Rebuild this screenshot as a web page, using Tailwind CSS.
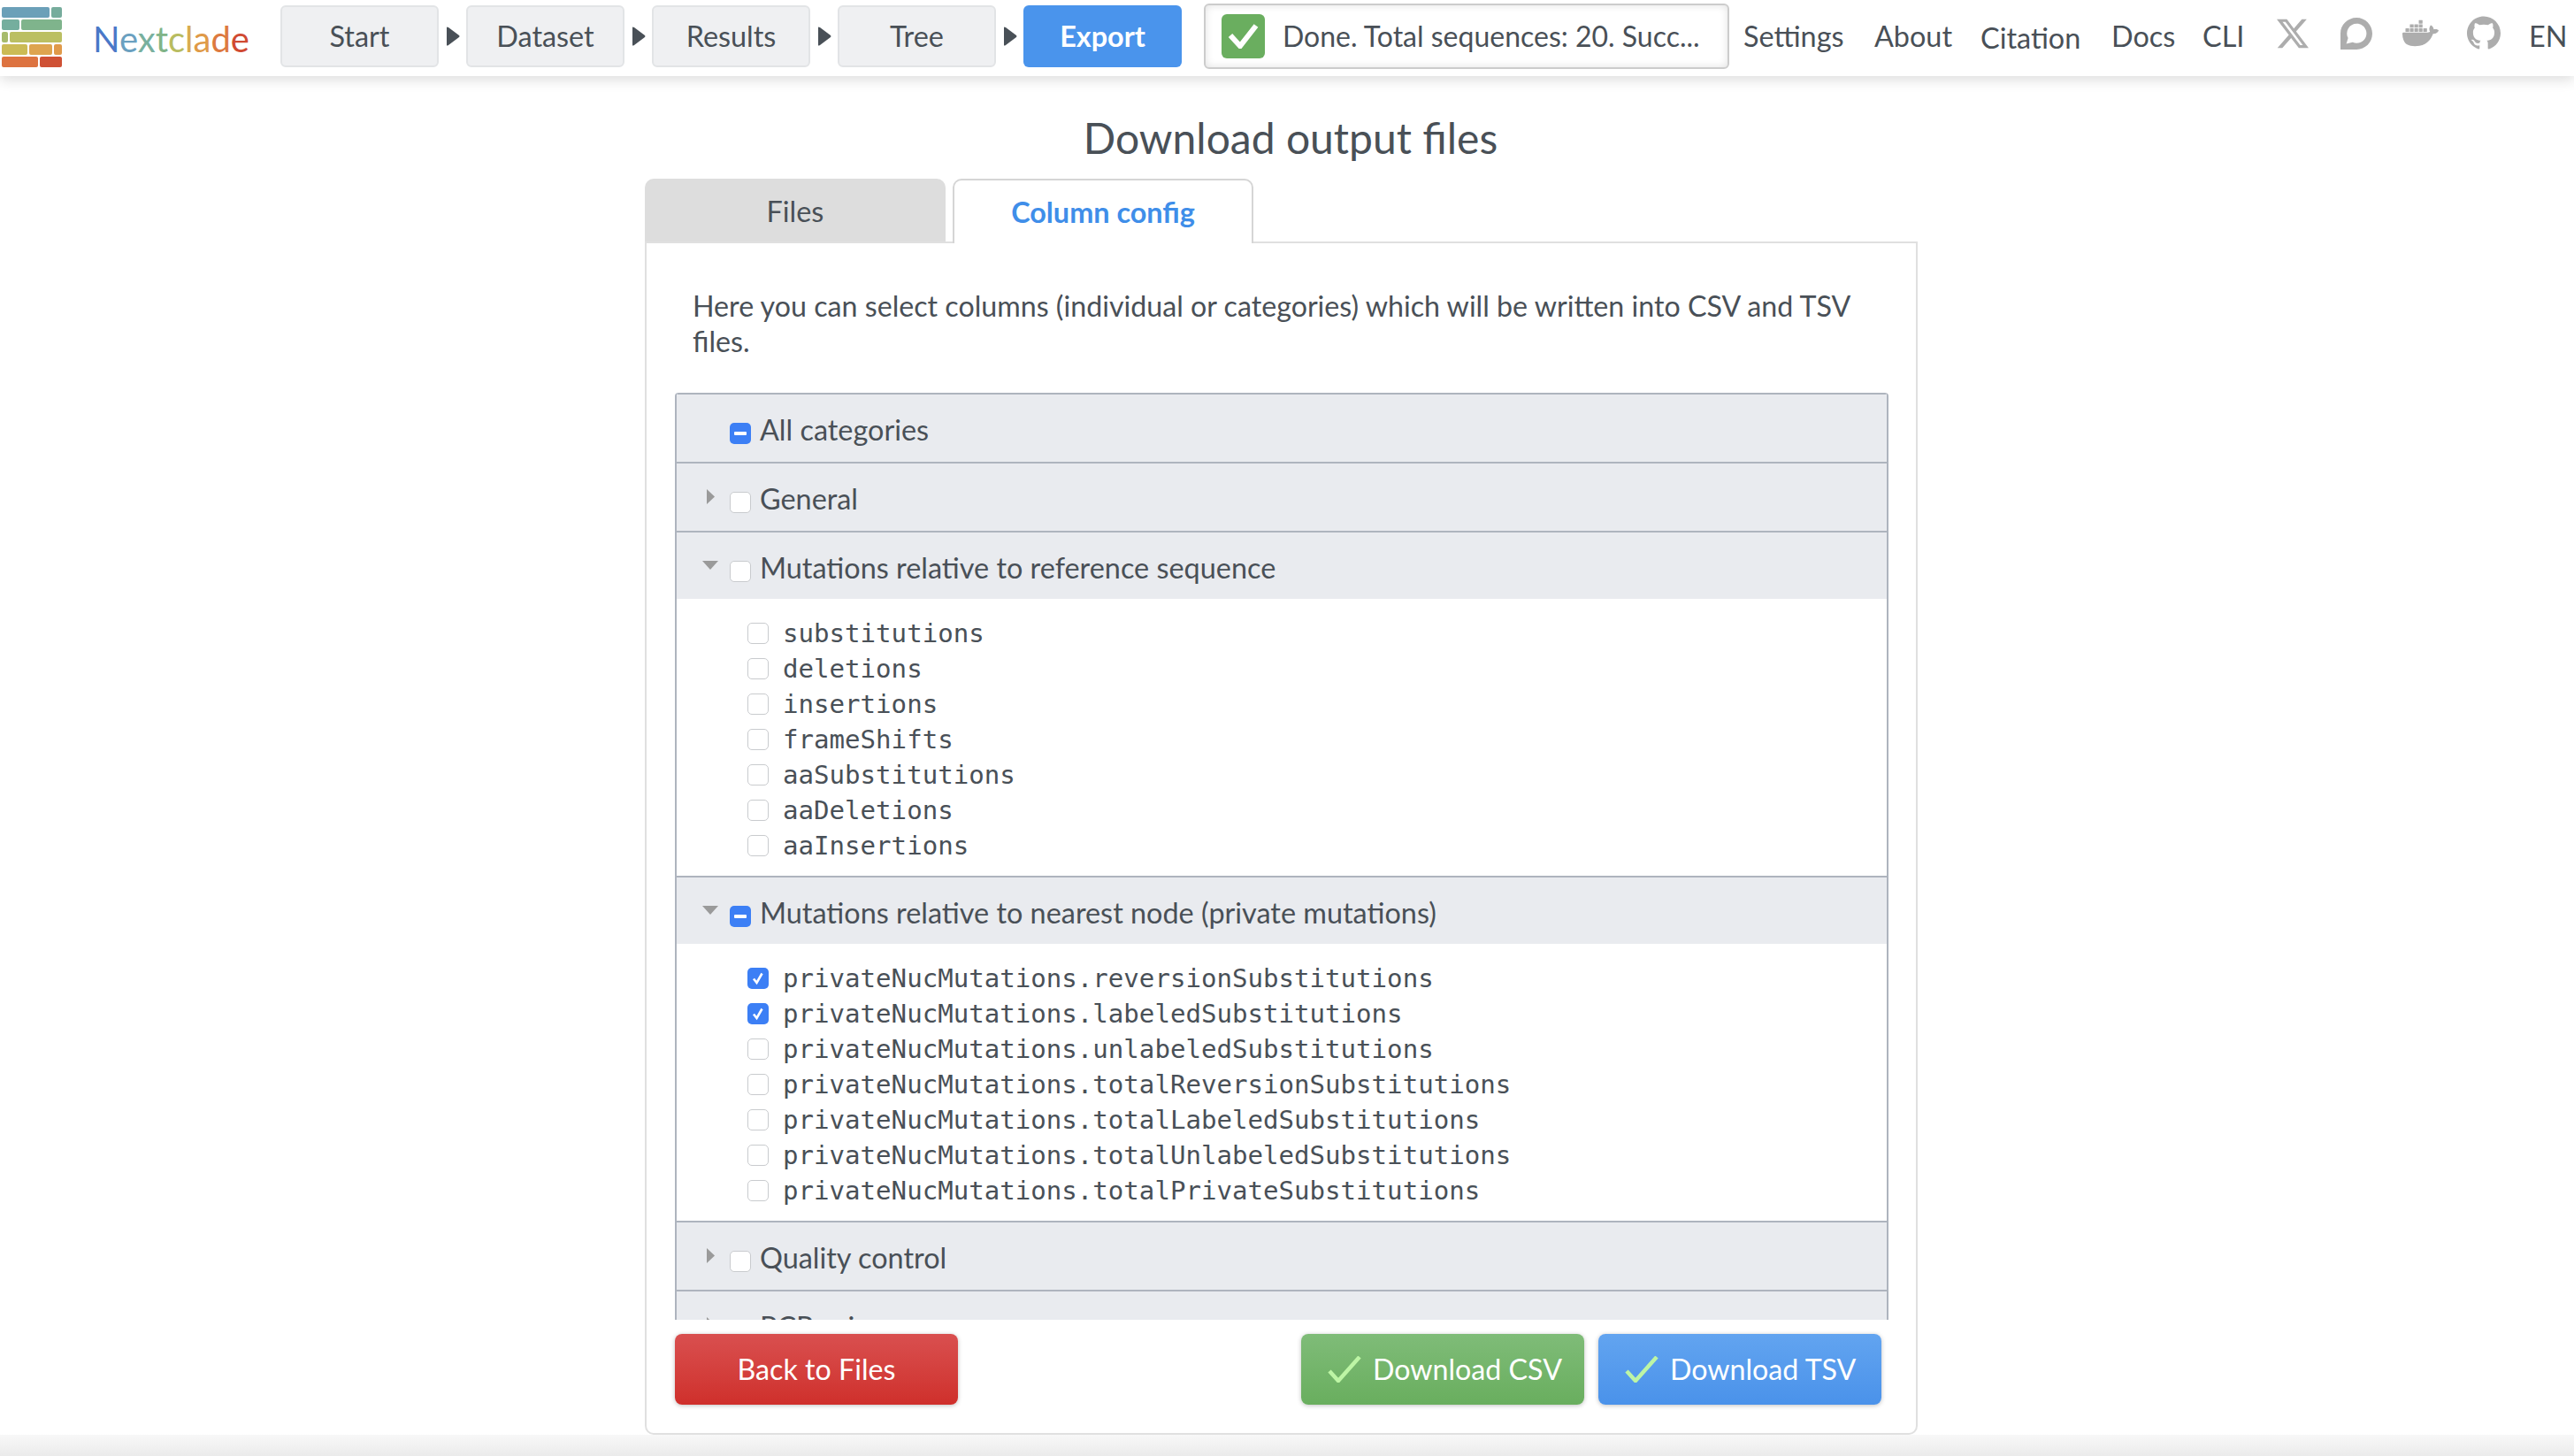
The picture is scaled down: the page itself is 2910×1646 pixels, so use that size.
<!DOCTYPE html>
<html lang="en">
<head>
  <meta charset="UTF-8" />
  <title>Nextclade</title>
  <script src="https://cdn.jsdelivr.net/npm/@tailwindcss/browser@4"></script>
</head>
<body class="bg-white text-[#495057] font-['Lato',sans-serif] text-[32.4px] leading-[40px]">
<div class="w-[2910px] h-[1646px] overflow-hidden flex flex-col">
  <!-- Navbar -->
  <nav class="h-[86px] shrink-0 flex items-center pb-[4px] relative z-10 bg-white shadow-[0_4px_14px_rgba(0,0,0,0.14)]">
    <!-- Logo -->
    <div class="w-[68px] ml-[2px] mt-[2px] flex flex-col gap-[2px]">
      <div class="flex gap-[2px] h-[12px]"><div class="w-[54px] bg-[#6ba0b8] rounded-[2px]"></div><div class="flex-1 bg-[#76ac9c] rounded-[2px]"></div></div>
      <div class="flex gap-[2px] h-[12px]"><div class="w-[20px] bg-[#75ae9e] rounded-[2px]"></div><div class="flex-1 bg-[#7fb48c] rounded-[2px]"></div></div>
      <div class="flex gap-[2px] h-[12px]"><div class="w-[7px] bg-[#a7bb6b] rounded-[2px]"></div><div class="flex-1 bg-[#bbbf62] rounded-[2px]"></div></div>
      <div class="flex gap-[2px] h-[12px]"><div class="w-[29px] bg-[#cbbb55] rounded-[2px]"></div><div class="w-[26px] bg-[#dea44f] rounded-[2px]"></div><div class="flex-1 bg-[#e09a4a] rounded-[2px]"></div></div>
      <div class="flex gap-[2px] h-[12px]"><div class="w-[41px] bg-[#dd7340] rounded-[2px]"></div><div class="flex-1 bg-[#cf5135] rounded-[2px]"></div></div>
    </div>
    <div class="ml-[35px] mt-[6px] w-[212px] text-[40px] font-normal"><span class="text-[#4a78c8]">N</span><span class="text-[#6aa0c0]">e</span><span class="text-[#78b09e]">x</span><span class="text-[#80b488]">t</span><span class="text-[#b8bc60]">c</span><span class="text-[#d8ac50]">l</span><span class="text-[#df9a48]">a</span><span class="text-[#dd7a40]">d</span><span class="text-[#d04a32]">e</span></div>

    <!-- Steps -->
    <div class="w-[179px] h-[70px] flex items-center justify-center bg-[#eff0f2] border-2 border-[#e2e4e6] rounded-[6px]">Start</div>
    <div class="w-[31px] pl-[2px] flex justify-center"><svg width="15" height="22" viewBox="0 0 15 22"><path d="M0 1 Q0 0 2 1 L14 10 Q15 11 14 12 L2 21 Q0 22 0 21 Z" fill="#495057"/></svg></div>
    <div class="w-[179px] h-[70px] flex items-center justify-center bg-[#eff0f2] border-2 border-[#e2e4e6] rounded-[6px]">Dataset</div>
    <div class="w-[31px] pl-[2px] flex justify-center"><svg width="15" height="22" viewBox="0 0 15 22"><path d="M0 1 Q0 0 2 1 L14 10 Q15 11 14 12 L2 21 Q0 22 0 21 Z" fill="#495057"/></svg></div>
    <div class="w-[179px] h-[70px] flex items-center justify-center bg-[#eff0f2] border-2 border-[#e2e4e6] rounded-[6px]">Results</div>
    <div class="w-[31px] pl-[2px] flex justify-center"><svg width="15" height="22" viewBox="0 0 15 22"><path d="M0 1 Q0 0 2 1 L14 10 Q15 11 14 12 L2 21 Q0 22 0 21 Z" fill="#495057"/></svg></div>
    <div class="w-[179px] h-[70px] flex items-center justify-center bg-[#eff0f2] border-2 border-[#e2e4e6] rounded-[6px]">Tree</div>
    <div class="w-[31px] pl-[2px] flex justify-center"><svg width="15" height="22" viewBox="0 0 15 22"><path d="M0 1 Q0 0 2 1 L14 10 Q15 11 14 12 L2 21 Q0 22 0 21 Z" fill="#495057"/></svg></div>
    <div class="w-[179px] h-[70px] flex items-center justify-center bg-[#4a94ec] text-white font-bold rounded-[6px]">Export</div>

    <!-- Status -->
    <div class="ml-[25px] w-[594px] h-[74px] flex items-center pl-[18px] border-2 border-[#cccccc] rounded-[6px] bg-white shadow-[inset_0_0_10px_rgba(0,0,0,0.12)]">
      <div class="w-[49px] h-[50px] bg-[#6aae5f] rounded-[6px] flex items-center justify-center">
        <svg width="35" height="28" viewBox="0 0 35 28"><path d="M3 13 L14 25 L32 2" fill="none" stroke="#fff" stroke-width="6"/></svg>
      </div>
      <span class="ml-[20px] text-[32px]">Done. Total sequences: 20. Succ...</span>
    </div>

    <!-- Links -->
    <span class="absolute left-[1971px] top-[21px]">Settings</span>
    <span class="absolute left-[2119px] top-[21px]">About</span>
    <span class="absolute left-[2239px] top-[23px]">Citation</span>
    <span class="absolute left-[2387px] top-[21px]">Docs</span>
    <span class="absolute left-[2490px] top-[21px]">CLI</span>
    <svg class="absolute left-[2574px] top-[20px]" width="36" height="36" viewBox="0 0 24 24" fill="#adadad"><path d="M18.901 1.153h3.68l-8.04 9.19L24 22.846h-7.406l-5.8-7.584-6.638 7.584H.474l8.6-9.83L0 1.154h7.594l5.243 6.932ZM17.61 20.644h2.039L6.486 3.24H4.298Z"/></svg>
    <svg class="absolute left-[2646px] top-[20px]" width="36" height="36" viewBox="0 0 24 24" fill="#adadad"><path d="M12.103 0C18.666 0 24 5.485 24 11.997c0 6.51-5.33 11.99-11.9 11.99L0 24V11.79C0 5.28 5.532 0 12.103 0zm.116 4.563c-2.593-.003-4.996 1.352-6.337 3.57-1.33 2.208-1.387 4.957-.148 7.22L4.4 19.61l4.794-1.074c2.745 1.225 5.965.676 8.136-1.39 2.17-2.054 2.86-5.228 1.737-7.997-1.135-2.778-3.84-4.59-6.84-4.585h-.008z"/></svg>
    <svg class="absolute left-[2716px] top-[17px]" width="41" height="41" viewBox="0 0 24 24" fill="#adadad"><path d="M13.983 11.078h2.119a.186.186 0 00.186-.185V9.006a.186.186 0 00-.186-.186h-2.119a.185.185 0 00-.185.185v1.888c0 .102.083.185.185.185m-2.954-5.43h2.118a.186.186 0 00.186-.186V3.574a.186.186 0 00-.186-.185h-2.118a.185.185 0 00-.185.185v1.888c0 .102.082.185.185.186m0 2.716h2.118a.187.187 0 00.186-.186V6.29a.186.186 0 00-.186-.185h-2.118a.185.185 0 00-.185.185v1.887c0 .102.082.185.185.186m-2.93 0h2.12a.186.186 0 00.184-.186V6.29a.185.185 0 00-.185-.185H8.1a.185.185 0 00-.185.185v1.887c0 .102.083.185.185.186m-2.964 0h2.119a.186.186 0 00.185-.186V6.29a.185.185 0 00-.185-.185H5.136a.186.186 0 00-.186.185v1.887c0 .102.084.185.186.186m5.893 2.715h2.118a.186.186 0 00.186-.185V9.006a.186.186 0 00-.186-.186h-2.118a.185.185 0 00-.185.185v1.888c0 .102.082.185.185.185m-2.93 0h2.12a.185.185 0 00.184-.185V9.006a.185.185 0 00-.184-.186h-2.12a.185.185 0 00-.184.185v1.888c0 .102.083.185.185.185m-2.964 0h2.119a.185.185 0 00.185-.185V9.006a.185.185 0 00-.184-.186h-2.12a.186.186 0 00-.186.186v1.887c0 .102.084.185.186.185m-2.92 0h2.12a.185.185 0 00.184-.185V9.006a.185.185 0 00-.184-.186h-2.12a.185.185 0 00-.185.185v1.888c0 .102.083.185.185.185M23.763 9.89c-.065-.051-.672-.51-1.954-.51-.338.001-.676.03-1.01.087-.248-1.7-1.653-2.53-1.716-2.566l-.344-.199-.226.327c-.284.438-.49.922-.612 1.43-.23.97-.09 1.882.403 2.661-.595.332-1.55.413-1.744.42H.751a.751.751 0 00-.75.748 11.376 11.376 0 00.692 4.062c.545 1.428 1.355 2.48 2.41 3.124 1.18.723 3.1 1.137 5.275 1.137.983.003 1.963-.086 2.93-.266a12.248 12.248 0 003.823-1.389c.98-.567 1.86-1.288 2.61-2.136 1.252-1.418 1.998-2.997 2.553-4.4h.221c1.372 0 2.215-.549 2.68-1.009.309-.293.55-.65.707-1.046l.098-.288Z"/></svg>
    <svg class="absolute left-[2789px] top-[18px]" width="38" height="38" viewBox="0 0 24 24" fill="#adadad"><path d="M12 .297c-6.63 0-12 5.373-12 12 0 5.303 3.438 9.8 8.205 11.385.6.113.82-.258.82-.577 0-.285-.01-1.04-.015-2.04-3.338.724-4.042-1.61-4.042-1.61C4.422 18.07 3.633 17.7 3.633 17.7c-1.087-.744.084-.729.084-.729 1.205.084 1.838 1.236 1.838 1.236 1.07 1.835 2.809 1.305 3.495.998.108-.776.417-1.305.76-1.605-2.665-.3-5.466-1.332-5.466-5.93 0-1.31.465-2.38 1.235-3.22-.135-.303-.54-1.523.105-3.176 0 0 1.005-.322 3.3 1.23.96-.267 1.98-.399 3-.405 1.02.006 2.04.138 3 .405 2.28-1.552 3.285-1.23 3.285-1.23.645 1.653.24 2.873.12 3.176.765.84 1.23 1.91 1.23 3.22 0 4.61-2.805 5.625-5.475 5.92.42.36.81 1.096.81 2.22 0 1.606-.015 2.896-.015 3.286 0 .315.21.69.825.57C20.565 22.092 24 17.592 24 12.297c0-6.627-5.373-12-12-12"/></svg>
    <span class="absolute left-[2859px] top-[21px]">EN</span>
  </nav>

  <!-- Contenido -->
  <main class="flex-1 min-h-0 flex flex-col pl-[729px]">
    <h1 class="w-[1460px] text-center text-[48px] leading-[58px] mt-[41px] h-[75px]">Download output files</h1>

    <div class="flex gap-[8px] h-[71px] relative z-[1]">
      <div class="w-[340px] h-[71px] pt-[2px] flex items-center justify-center bg-[#dddddd] rounded-t-[10px]">Files</div>
      <div class="w-[340px] h-[73px] flex items-center justify-center bg-white border-2 border-b-0 border-[#d5d5d5] rounded-t-[10px] text-[#3f8ee9] font-bold">Column config</div>
    </div>

    <div class="w-[1439px] h-[1349px] border-2 border-[#e0e0e0] rounded-b-[10px] pl-[32px] pr-[31px] flex flex-col">
      <p class="w-[1370px] pl-[20px] pt-[51px] h-[169px] text-[32.2px]">Here you can select columns (individual or categories) which will be written into CSV and TSV files.</p>

      <!-- Lista de columnas -->
      <div class="h-[1048px] w-[1372px] shrink-0 overflow-hidden border-x-2 border-[#aeb4be] rounded-t-[4px]">
        <div class="h-[78px] pt-[4px] bg-[#e9ebef] border-t-2 border-[#aeb4be] flex items-center pl-[29px]">
          <div class="w-[18px] mr-[13px]"></div>
          <div class="w-[24px] h-[24px] mt-[8px] rounded-[5px] bg-[#3c7ff5] flex items-center justify-center"><div class="w-[14px] h-[4px] bg-white rounded-[1px]"></div></div>
          <span class="ml-[10px]">All categories</span>
        </div>
        <div class="h-[78px] pt-[4px] bg-[#e9ebef] border-t-2 border-[#aeb4be] flex items-center pl-[29px]">
          <div class="w-[18px] mr-[13px] mt-[-6px] flex justify-center"><svg width="9" height="17" viewBox="0 0 9 17"><path d="M0 0 L9 8.5 L0 17 Z" fill="#9a9a9a"/></svg></div>
          <div class="w-[24px] h-[24px] mt-[8px] rounded-[5px] bg-white border-[1.5px] border-[#c9cbce]"></div>
          <span class="ml-[10px]">General</span>
        </div>
        <div class="h-[77px] pt-[4px] bg-[#e9ebef] border-t-2 border-[#aeb4be] flex items-center pl-[29px]">
          <div class="w-[18px] mr-[13px] mt-[-6px] flex justify-center"><svg width="18" height="10" viewBox="0 0 18 10"><path d="M0 0 L18 0 L9 10 Z" fill="#9a9a9a"/></svg></div>
          <div class="w-[24px] h-[24px] mt-[8px] rounded-[5px] bg-white border-[1.5px] border-[#c9cbce]"></div>
          <span class="ml-[10px]">Mutations relative to reference sequence</span>
        </div>
        <div class="h-[313px] pt-[19px] pl-[80px] font-['DejaVu_Sans_Mono',monospace] text-[29.1px]">
          <div class="h-[40px] flex items-center gap-[16px]"><div class="w-[24px] h-[24px] rounded-[5px] bg-white border-[1.5px] border-[#c9cbce]"></div>substitutions</div>
          <div class="h-[40px] flex items-center gap-[16px]"><div class="w-[24px] h-[24px] rounded-[5px] bg-white border-[1.5px] border-[#c9cbce]"></div>deletions</div>
          <div class="h-[40px] flex items-center gap-[16px]"><div class="w-[24px] h-[24px] rounded-[5px] bg-white border-[1.5px] border-[#c9cbce]"></div>insertions</div>
          <div class="h-[40px] flex items-center gap-[16px]"><div class="w-[24px] h-[24px] rounded-[5px] bg-white border-[1.5px] border-[#c9cbce]"></div>frameShifts</div>
          <div class="h-[40px] flex items-center gap-[16px]"><div class="w-[24px] h-[24px] rounded-[5px] bg-white border-[1.5px] border-[#c9cbce]"></div>aaSubstitutions</div>
          <div class="h-[40px] flex items-center gap-[16px]"><div class="w-[24px] h-[24px] rounded-[5px] bg-white border-[1.5px] border-[#c9cbce]"></div>aaDeletions</div>
          <div class="h-[40px] flex items-center gap-[16px]"><div class="w-[24px] h-[24px] rounded-[5px] bg-white border-[1.5px] border-[#c9cbce]"></div>aaInsertions</div>
        </div>
        <div class="h-[77px] pt-[4px] bg-[#e9ebef] border-t-2 border-[#aeb4be] flex items-center pl-[29px]">
          <div class="w-[18px] mr-[13px] mt-[-6px] flex justify-center"><svg width="18" height="10" viewBox="0 0 18 10"><path d="M0 0 L18 0 L9 10 Z" fill="#9a9a9a"/></svg></div>
          <div class="w-[24px] h-[24px] mt-[8px] rounded-[5px] bg-[#3c7ff5] flex items-center justify-center"><div class="w-[14px] h-[4px] bg-white rounded-[1px]"></div></div>
          <span class="ml-[10px]">Mutations relative to nearest node (private mutations)</span>
        </div>
        <div class="h-[313px] pt-[19px] pl-[80px] font-['DejaVu_Sans_Mono',monospace] text-[29.1px]">
          <div class="h-[40px] flex items-center gap-[16px]"><div class="w-[24px] h-[24px] rounded-[5px] bg-[#3c7ff5] flex items-center justify-center"><svg width="16" height="16" viewBox="0 0 16 16"><path d="M3 8.5 L6.5 13 L12.5 2.5" fill="none" stroke="#fff" stroke-width="2.6"/></svg></div>privateNucMutations.reversionSubstitutions</div>
          <div class="h-[40px] flex items-center gap-[16px]"><div class="w-[24px] h-[24px] rounded-[5px] bg-[#3c7ff5] flex items-center justify-center"><svg width="16" height="16" viewBox="0 0 16 16"><path d="M3 8.5 L6.5 13 L12.5 2.5" fill="none" stroke="#fff" stroke-width="2.6"/></svg></div>privateNucMutations.labeledSubstitutions</div>
          <div class="h-[40px] flex items-center gap-[16px]"><div class="w-[24px] h-[24px] rounded-[5px] bg-white border-[1.5px] border-[#c9cbce]"></div>privateNucMutations.unlabeledSubstitutions</div>
          <div class="h-[40px] flex items-center gap-[16px]"><div class="w-[24px] h-[24px] rounded-[5px] bg-white border-[1.5px] border-[#c9cbce]"></div>privateNucMutations.totalReversionSubstitutions</div>
          <div class="h-[40px] flex items-center gap-[16px]"><div class="w-[24px] h-[24px] rounded-[5px] bg-white border-[1.5px] border-[#c9cbce]"></div>privateNucMutations.totalLabeledSubstitutions</div>
          <div class="h-[40px] flex items-center gap-[16px]"><div class="w-[24px] h-[24px] rounded-[5px] bg-white border-[1.5px] border-[#c9cbce]"></div>privateNucMutations.totalUnlabeledSubstitutions</div>
          <div class="h-[40px] flex items-center gap-[16px]"><div class="w-[24px] h-[24px] rounded-[5px] bg-white border-[1.5px] border-[#c9cbce]"></div>privateNucMutations.totalPrivateSubstitutions</div>
        </div>
        <div class="h-[78px] pt-[4px] bg-[#e9ebef] border-t-2 border-[#aeb4be] flex items-center pl-[29px]">
          <div class="w-[18px] mr-[13px] mt-[-6px] flex justify-center"><svg width="9" height="17" viewBox="0 0 9 17"><path d="M0 0 L9 8.5 L0 17 Z" fill="#9a9a9a"/></svg></div>
          <div class="w-[24px] h-[24px] mt-[8px] rounded-[5px] bg-white border-[1.5px] border-[#c9cbce]"></div>
          <span class="ml-[10px]">Quality control</span>
        </div>
        <div class="h-[78px] pt-[4px] bg-[#e9ebef] border-t-2 border-[#aeb4be] flex items-center pl-[29px]">
          <div class="w-[18px] mr-[13px] mt-[-6px] flex justify-center"><svg width="9" height="17" viewBox="0 0 9 17"><path d="M0 0 L9 8.5 L0 17 Z" fill="#9a9a9a"/></svg></div>
          <div class="w-[24px] h-[24px] mt-[8px] rounded-[5px] bg-white border-[1.5px] border-[#c9cbce]"></div>
          <span class="ml-[10px]">PCR primers</span>
        </div>
      </div>

      <!-- Botones -->
      <div class="flex mt-[16px] gap-[16px] pr-[8px] text-white text-[32.2px] whitespace-nowrap">
        <button class="w-[320px] h-[80px] shrink-0 mr-auto rounded-[8px] bg-linear-to-b from-[#d94f4f] to-[#cf2f2b] shadow-[0_1px_5px_rgba(0,0,0,0.25)]">Back to Files</button>
        <button class="w-[320px] h-[80px] shrink-0 rounded-[8px] bg-linear-to-b from-[#7fbc78] to-[#69ae5e] shadow-[0_1px_5px_rgba(0,0,0,0.25)] flex items-center pl-[30px] gap-[13px]"><svg width="38" height="30" viewBox="0 0 38 30"><path d="M2 17 L12 28 L36 1" fill="none" stroke="#bdf5a5" stroke-width="4.5"/></svg>Download CSV</button>
        <button class="w-[320px] h-[80px] shrink-0 rounded-[8px] bg-linear-to-b from-[#62a4f0] to-[#4a92ea] shadow-[0_1px_5px_rgba(0,0,0,0.25)] flex items-center pl-[30px] gap-[13px]"><svg width="38" height="30" viewBox="0 0 38 30"><path d="M2 17 L12 28 L36 1" fill="none" stroke="#bdf5a5" stroke-width="4.5"/></svg>Download TSV</button>
      </div>
    </div>
  </main>
  <div class="h-[24px] shrink-0 bg-linear-to-b from-[#f8f8f8] to-[#ebebeb]"></div>
</div>
</body>
</html>
